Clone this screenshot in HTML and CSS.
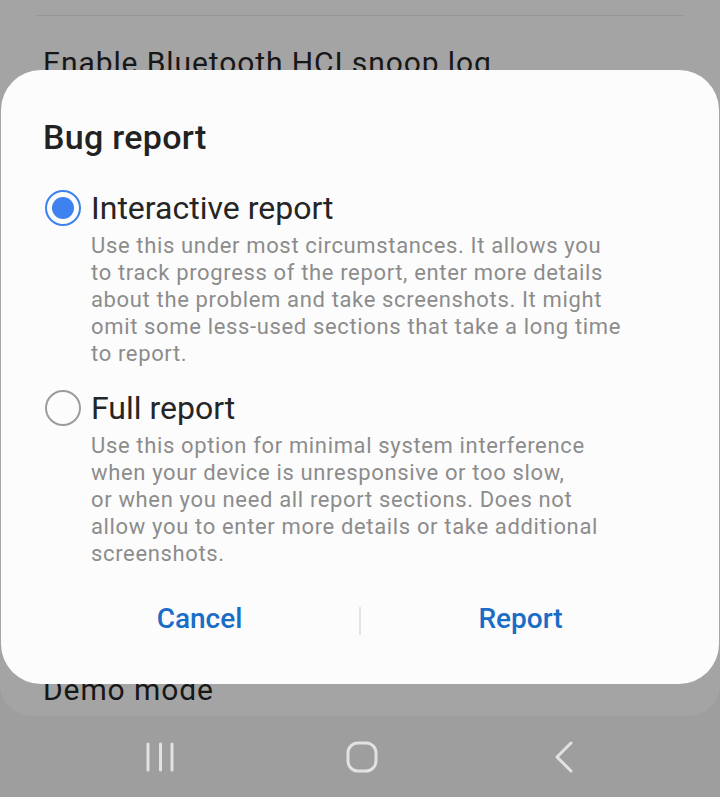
FILE: index.html
```html
<!DOCTYPE html>
<html lang="en">
<head>
<meta charset="utf-8">
<title>Bug report</title>
<link rel="stylesheet" href="styles.css">
</head>
<body>
<div class="screen">
  <div class="settings-card">
    <div class="divider"></div>
    <div class="setting-item first">Enable Bluetooth HCI snoop log</div>
    <div class="setting-spacer"></div>
    <div class="setting-item last">Demo mode</div>
  </div>
  <nav class="navbar">
    <svg class="nav-recent" width="28" height="30" viewBox="0 0 28 30">
      <g stroke="#e2e2e2" stroke-width="3" stroke-linecap="round">
        <line x1="2" y1="2" x2="2" y2="28"/>
        <line x1="14.5" y1="2" x2="14.5" y2="28"/>
        <line x1="26" y1="2" x2="26" y2="28"/>
      </g>
    </svg>
    <svg class="nav-home" width="32" height="32" viewBox="0 0 32 32">
      <rect x="2" y="2" width="28" height="28" rx="10" ry="10" fill="none" stroke="#e2e2e2" stroke-width="3"/>
    </svg>
    <svg class="nav-back" width="20" height="32" viewBox="0 0 20 32">
      <polyline points="17,2 3,16 17,30" fill="none" stroke="#e2e2e2" stroke-width="3" stroke-linecap="round" stroke-linejoin="round"/>
    </svg>
  </nav>

  <div class="dialog">
    <h1 class="dialog-title">Bug report</h1>

    <div class="option">
      <div class="option-row">
        <span class="radio checked"><span class="dot"></span></span>
        <span class="option-label">Interactive report</span>
      </div>
      <p class="option-desc">Use this under most circumstances. It allows you<br>to track progress of the report, enter more details<br>about the problem and take screenshots. It might<br>omit some less-used sections that take a long time<br>to report.</p>
    </div>

    <div class="option second">
      <div class="option-row">
        <span class="radio"></span>
        <span class="option-label">Full report</span>
      </div>
      <p class="option-desc">Use this option for minimal system interference<br>when your device is unresponsive or too slow,<br>or when you need all report sections. Does not<br>allow you to enter more details or take additional<br>screenshots.</p>
    </div>

    <div class="actions">
      <button class="action">Cancel</button>
      <span class="action-sep"></span>
      <button class="action">Report</button>
    </div>
  </div>
</div>
</body>
</html>
```

FILE: styles.css
```css
* { box-sizing: border-box; }

html, body {
  margin: 0;
  padding: 0;
  background: #9e9e9e;
}

body {
  font-family: Roboto, "Noto Sans", "Liberation Sans", sans-serif;
}

.screen {
  position: relative;
  width: 720px;
  height: 797px;
  overflow: hidden;
  background: #9e9e9e;
  display: flex;
  flex-direction: column;
}

.settings-card {
  height: 716px;
  background: #a4a4a4;
  border-radius: 0 0 32px 32px;
  padding-top: 15px;
  display: flex;
  flex-direction: column;
}

.divider {
  height: 1px;
  margin: 0 36px;
  background: #969696;
}

.setting-item {
  padding-left: 43px;
  font-size: 30px;
  line-height: 40px;
  letter-spacing: 0.9px;
  color: #171717;
}

.setting-item.first {
  margin-top: 27px;
}

.setting-spacer {
  flex: 1;
}

.setting-item.last {
  margin-bottom: 6px;
}

.navbar {
  flex: 1;
  display: flex;
  align-items: center;
  padding-left: 146px;
}

.nav-home { margin-left: 172px; }
.nav-back { margin-left: 176px; }

.dialog {
  position: absolute;
  top: 70px;
  left: 1px;
  right: 1px;
  background: #fcfcfc;
  border-radius: 40px;
  padding: 50px 0 45px;
}

.dialog-title {
  margin: 0 0 34px 42px;
  font-size: 34px;
  line-height: 34px;
  font-weight: 500;
  letter-spacing: 0.3px;
  color: #222222;
}

.option.second {
  margin-top: 21px;
}

.option-row {
  display: flex;
  align-items: center;
  height: 40px;
  padding-left: 44px;
}

.radio {
  width: 36px;
  height: 36px;
  border-radius: 50%;
  border: 2px solid #9c9c9c;
  display: flex;
  align-items: center;
  justify-content: center;
  flex: none;
}

.radio.checked {
  border-color: #3d82ee;
}

.radio .dot {
  width: 22px;
  height: 22px;
  border-radius: 50%;
  background: #3d82ee;
}

.option-label {
  margin-left: 10px;
  font-size: 32px;
  line-height: 40px;
  color: #252525;
}

.option-desc {
  margin: 4px 0 0 90px;
  font-size: 22px;
  line-height: 27px;
  color: #8c8c8c;
  letter-spacing: 0.65px;
}

.actions {
  margin-top: 32px;
  display: flex;
  align-items: center;
  padding: 0 39px;
  height: 40px;
}

.action {
  flex: 1;
  border: 0;
  background: transparent;
  font-family: Roboto, "Noto Sans", "Liberation Sans", sans-serif;
  font-size: 28px;
  line-height: 40px;
  font-weight: 500;
  color: #1a6dc6;
  padding: 0;
}

.action-sep {
  width: 2px;
  height: 28px;
  background: #e4e4e4;
  margin-top: 4px;
}
```
